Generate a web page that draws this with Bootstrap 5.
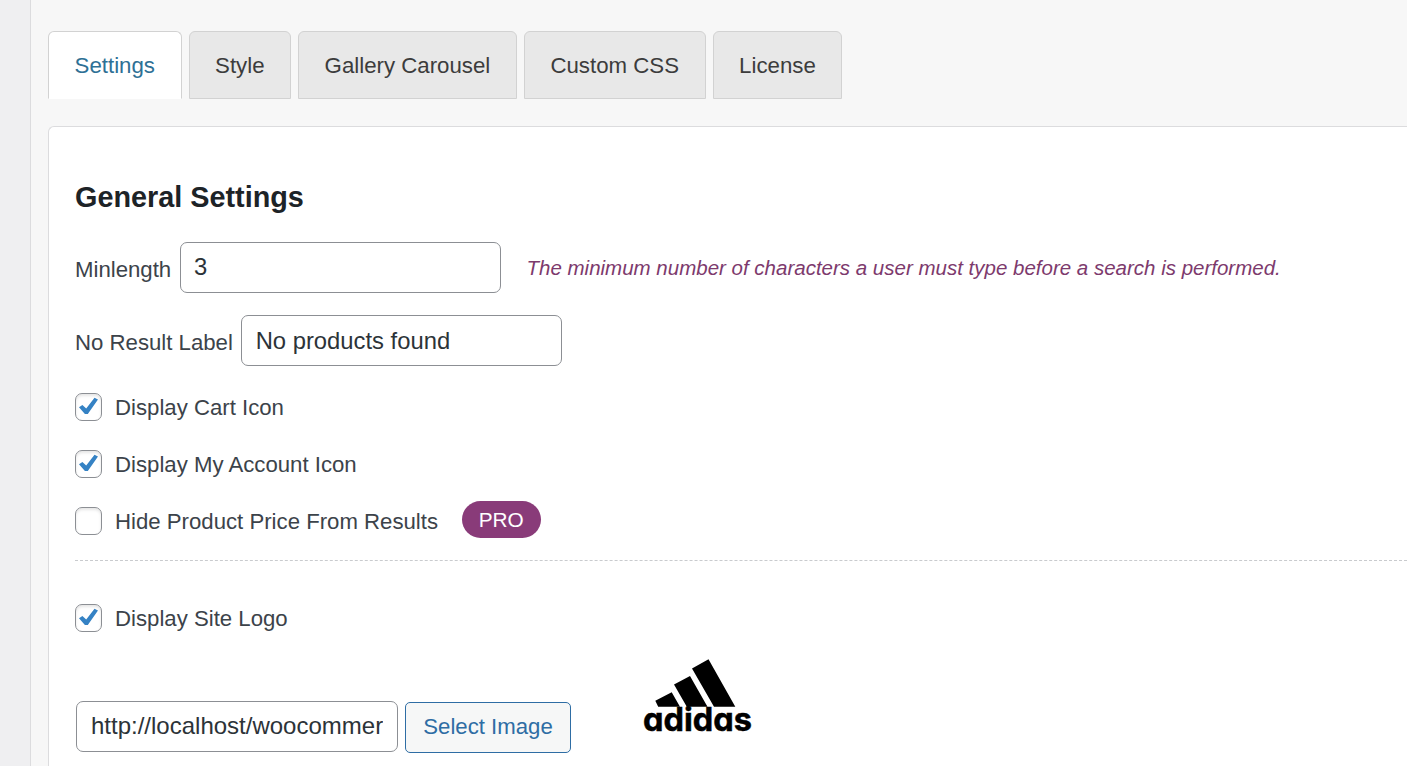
<!DOCTYPE html>
<html lang="en">
<head>
<meta charset="utf-8">
<meta name="viewport" content="width=device-width, initial-scale=1">
<title>General Settings</title>
<link href="https://cdn.jsdelivr.net/npm/bootstrap@5.3.0/dist/css/bootstrap.min.css" rel="stylesheet">
<style>
  body { font-family: "Liberation Sans", Arial, sans-serif; font-size: 22.2px; line-height: 30px; color: #3c434a; background: #f7f7f7; height: 766px; }
  .side-strip { width: 31px; background: #efeff1; border-right: 1px solid #dcdcde; }
  .page-area { padding: 31px 0 0 17px; min-width: 0; }
  .settings-tabs { gap: 7px; margin-bottom: 27px; border: 0; }
  .settings-tabs .nav-link { height: 68px; padding: 18px 25.55px 0; color: #3c3c3c; font-size: 22.25px; line-height: 32px; white-space: nowrap; background: #e8e8e8; border: 1px solid #d2d2d2; border-radius: 6px 6px 0 0; margin: 0; }
  .settings-tabs .nav-link.active { color: #2e7095; background: #fff; border-color: #d2d2d2; border-bottom-color: #fff; }
  .panel-box { height: 660px; background: #fff; border: 1px solid #dcdcde; border-width: 1px 0 0 1px; border-radius: 6px 0 0 0; padding: 51px 0 0 26px; }
  .panel-title { font-size: 28.8px; line-height: 38px; font-weight: 700; color: #1d2327; margin: 0 0 26px; }
  .field-row { height: 51px; margin-bottom: 22px; }
  .form-control.text-field { width: 321px; height: 51px; font-size: 24px; line-height: 30px; padding: 0 14px 1px; color: #2c3338; border: 1px solid #8c8f94; border-radius: 7px; }
  .field-row .text-field { font-size: 23.8px; padding-left: 13.5px; }
  #noresult { padding: 1px 14px 0 13.5px; }
  .field-label { padding-top: 4px; margin-right: 8.3px; white-space: nowrap; }
  .hint { font-size: 20.5px; font-style: italic; color: #7d3a6d; margin-left: 26px; white-space: nowrap; }
  .checks { padding-top: 13px; }
  .check-row { height: 57px; padding: 0; margin: 0; min-height: 0; }
  .check-row .form-check-input { width: 27px; height: 28px; float: none; margin: -2px 13px 0 0; border: 1px solid #8c8f94; border-radius: 7px; background-color: #fff; box-shadow: inset 0 2px 3px rgba(0,0,0,.1); }
  .check-row .form-check-input:checked { background-color: #fff; border-color: #8c8f94; background-size: 27px 28px; background-image: url("data:image/svg+xml,%3Csvg xmlns='http://www.w3.org/2000/svg' viewBox='0 0 27 28'%3E%3Cpath d='M4 14.2L7.4 12.1L11.2 15.6L19.5 4.8L23 6.6L12.8 21H9.9Z' fill='%233582c4'/%3E%3C/svg%3E"); }
  .pro-pill { background: #893b79; font-size: 20.8px; font-weight: 400; line-height: 37px; height: 37px; width: 79px; padding: 0; margin: -5px 0 0 23.7px; }
  .divider { border-top: 1px dashed #c9cbce; margin: 10px 0 29px; }
  .logo-row { padding: 54px 0 0 1px; }
  .logo-row .text-field { width: 322px; }
  .select-btn { width: 166px; height: 51px; font-size: 22.2px; line-height: 30px; padding: 0 0 2px; color: #2e6da4; background: #f6f7f7; border: 1px solid #2e6da4; border-radius: 5px; margin: 1px 0 0 7px; }
  .brand-logo { margin: -43px 0 0 70px; overflow: visible; }
  .brand-logo text { font-family: Inter, "Open Sans", sans-serif; font-weight: 700; font-size: 33px; font-feature-settings: "cv11"; }
</style>
</head>
<body class="d-flex overflow-hidden">
<aside class="side-strip flex-shrink-0"></aside>
<main class="page-area flex-grow-1">
  <ul class="nav nav-tabs settings-tabs">
    <li class="nav-item"><a class="nav-link active" href="#">Settings</a></li>
    <li class="nav-item"><a class="nav-link" href="#">Style</a></li>
    <li class="nav-item"><a class="nav-link" href="#">Gallery Carousel</a></li>
    <li class="nav-item"><a class="nav-link" href="#">Custom CSS</a></li>
    <li class="nav-item"><a class="nav-link" href="#">License</a></li>
  </ul>
  <section class="panel-box">
    <h2 class="panel-title">General Settings</h2>
    <div class="field-row d-flex align-items-center">
      <label class="field-label" for="minlength">Minlength</label>
      <input class="form-control text-field" id="minlength" type="text" value="3">
      <span class="hint">The minimum number of characters a user must type before a search is performed.</span>
    </div>
    <div class="field-row d-flex align-items-center mb-0">
      <label class="field-label" for="noresult">No Result Label</label>
      <input class="form-control text-field" id="noresult" type="text" value="No products found">
    </div>
    <div class="checks">
      <div class="form-check check-row d-flex align-items-center">
        <input class="form-check-input" type="checkbox" id="cart" checked><label for="cart">Display Cart Icon</label>
      </div>
      <div class="form-check check-row d-flex align-items-center">
        <input class="form-check-input" type="checkbox" id="account" checked><label for="account">Display My Account Icon</label>
      </div>
      <div class="form-check check-row d-flex align-items-center">
        <input class="form-check-input" type="checkbox" id="price"><label for="price">Hide Product Price From Results</label>
        <span class="badge rounded-pill pro-pill">PRO</span>
      </div>
    </div>
    <div class="divider"></div>
    <div class="form-check check-row d-flex align-items-center">
      <input class="form-check-input" type="checkbox" id="logo" checked><label for="logo">Display Site Logo</label>
    </div>
    <div class="logo-row d-flex align-items-start">
      <input class="form-control text-field" type="text" value="http://localhost/woocommerce" aria-label="Logo address">
      <button class="btn select-btn" type="button">Select Image</button>
      <svg class="brand-logo" width="114" height="84" viewBox="641 658 114 84" role="img" aria-label="adidas">
        <path d="M655.3 700.7L671.7 692.3L680 706.7H658.2ZM674 684.5L690 676L707.5 706.7H686.8ZM692 668.5L708.5 659.2L735.3 706.7H714Z"/>
        <text x="643" y="731" textLength="109" lengthAdjust="spacingAndGlyphs" stroke="#000" stroke-width=".5">adidas</text>
      </svg>
    </div>
  </section>
</main>
<script src="https://cdn.jsdelivr.net/npm/bootstrap@5.3.0/dist/js/bootstrap.bundle.min.js"></script>
</body>
</html>
